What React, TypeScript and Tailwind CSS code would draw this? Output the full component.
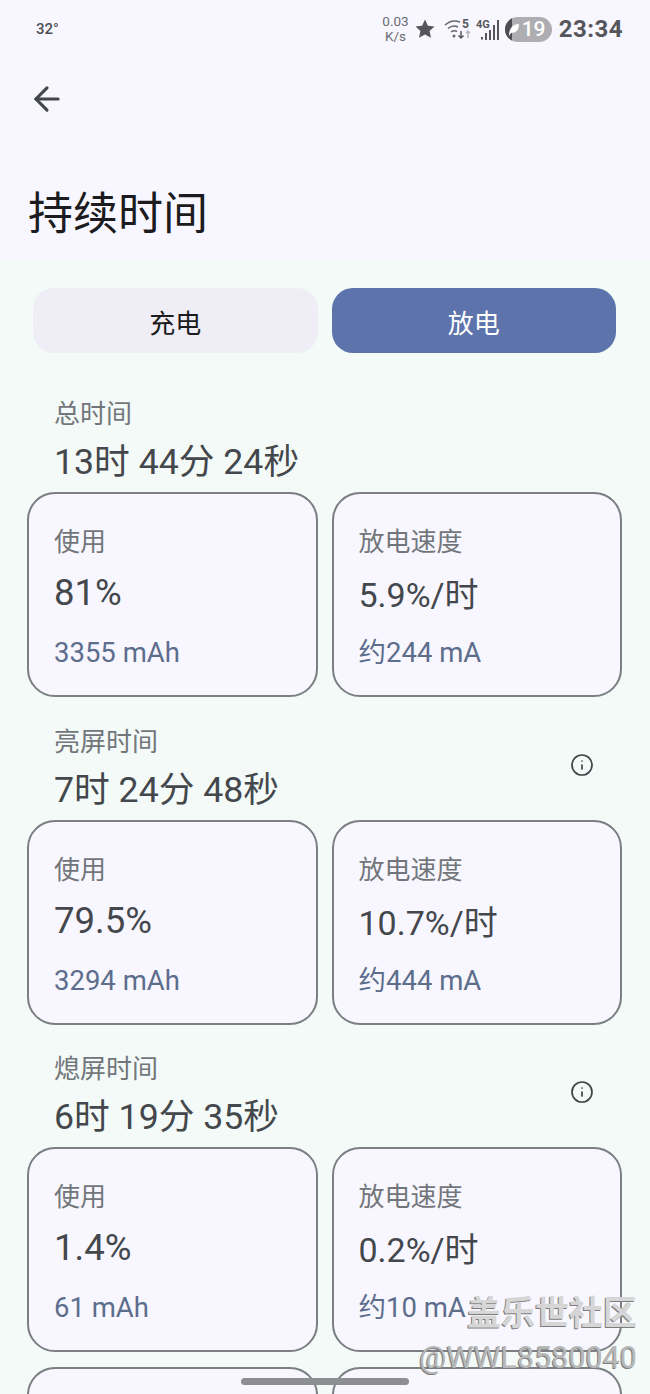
import { ArrowLeft, Info } from "lucide-react";

interface StatCardProps {
  label: string;
  value: string;
  sub: string;
  big?: boolean;
}

interface SectionProps {
  title: string;
  total: string;
  info?: boolean;
  usage: string;
  mah: string;
  rate: string;
  ma: string;
}

const fontStack = { fontFamily: 'Roboto, "Noto Sans CJK SC", sans-serif' };

const sections: SectionProps[] = [
  { title: "总时间", total: "13时 44分 24秒", usage: "81%", mah: "3355 mAh", rate: "5.9%/时", ma: "约244 mA" },
  { title: "亮屏时间", total: "7时 24分 48秒", info: true, usage: "79.5%", mah: "3294 mAh", rate: "10.7%/时", ma: "约444 mA" },
  { title: "熄屏时间", total: "6时 19分 35秒", info: true, usage: "1.4%", mah: "61 mAh", rate: "0.2%/时", ma: "约10 mA" },
];

function StatCard({ label, value, sub, big }: StatCardProps) {
  return (
    <div className="h-[205px] rounded-[28px] border-2 border-[#7b7e83] bg-[#f8f7ff] pl-[25px] pt-[31px]">
      <div className="h-[34px] text-[26px] leading-[34px] text-[#72767b]">{label}</div>
      {big ? (
        <div className="mt-[12px] h-[44px] text-[36.5px] leading-[44px] text-[#44474c]">{value}</div>
      ) : (
        <div className="mt-[14px] h-[44px] text-[34px] leading-[44px] text-[#44474c]">{value}</div>
      )}
      <div className={big ? "mt-[20px] h-[36px] text-[27.5px] leading-[36px] text-[#5d6d8c]" : "mt-[18px] h-[36px] text-[27.5px] leading-[36px] text-[#5d6d8c]"}>
        {sub}
      </div>
    </div>
  );
}

function StatusIcons() {
  return (
    <div className="flex items-center">
      <div className="mr-[6px] flex flex-col items-center text-[13.5px] leading-[15px] text-[#6b6c72]">
        <span>0.03</span>
        <span>K/s</span>
      </div>
      <svg width="20" height="20" viewBox="0 0 20 20" className="mr-[9px]">
        <path d="M10 0.5l2.9 6.3 6.6.7-4.900 4.500 1.400 6.800L10 15.400l-6 3.400 1.400-6.800L.5 7.500l6.600-.7z" fill="#55565c" />
      </svg>
      <svg width="30" height="22" viewBox="0 0 30 22" className="mr-[2px]">
        <path d="M1 7C6 2.500 11 2 16 4" fill="none" stroke="#66676d" strokeWidth="1.500" />
        <path d="M4 10.500c3.500-3 7-3 10-1.500" fill="none" stroke="#66676d" strokeWidth="1.500" />
        <path d="M7 14c2-1.500 4-1.500 6-.5" fill="none" stroke="#66676d" strokeWidth="1.500" />
        <circle cx="10" cy="18" r="1.500" fill="#66676d" />
        <path d="M17 13v7m-2.500-2.500L17 20l2.500-2.500" fill="none" stroke="#55565c" strokeWidth="1.500" />
        <path d="M24 20v-7m-2 2l2-2 2 2" fill="none" stroke="#b5b6ba" strokeWidth="1.500" />
        <text x="18" y="10" fontSize="12" fontWeight="700" fill="#55565c">5</text>
      </svg>
      <svg width="25" height="24" viewBox="0 0 25 24" className="mr-[4px]">
        <text x="0" y="11" fontSize="11" fontWeight="700" fill="#55565c">4G</text>
        <rect x="5" y="20" width="2" height="2.500" fill="#55565c" />
        <rect x="9" y="16" width="2" height="7" fill="#55565c" />
        <rect x="13" y="13" width="2" height="10" fill="#55565c" />
        <rect x="17" y="8" width="2" height="15" fill="#55565c" />
        <rect x="21" y="3" width="2" height="20" fill="#55565c" />
      </svg>
      <div className="relative mr-[7px] flex h-[25px] w-[47px] items-center overflow-hidden rounded-full bg-[#aeaeb2]">
        <div className="h-full w-[7px] bg-[#4d4e54]" />
        <svg width="12" height="14" viewBox="0 0 12 14" className="absolute left-[3px] top-[6px]">
          <path d="M1 13C1 6 4 1 11 1c0 6-3 9-8 9z" fill="#fff" />
        </svg>
        <span className="ml-[10px] text-[21px] font-medium leading-[25px] text-white">19</span>
      </div>
      <span className="text-[24px] font-bold leading-[30px] tracking-[0.5px] text-[#55565c]">23:34</span>
    </div>
  );
}

export default function App() {
  return (
    <div className="relative h-[1394px] w-[650px] overflow-hidden bg-[#f3faf7]" style={fontStack}>
      <div className="h-[258px] bg-[#f8f7ff]">
        <div className="flex h-[58px] items-center justify-between pl-[36px] pr-[27px]">
          <span className="text-[15px] font-medium leading-[20px] text-[#4d4e54]">32°</span>
          <StatusIcons />
        </div>
        <div className="flex h-[82px] items-center pl-[28px]">
          <ArrowLeft className="h-[38px] w-[38px] text-[#43464b]" strokeWidth={2} />
        </div>
        <div className="pl-[28px] pt-[44px] text-[45px] leading-[62px] text-[#1c1c20]">持续时间</div>
      </div>

      <div className="pl-[27px] pr-[28px] pt-[30px]">
        <div className="grid grid-cols-2 gap-[14px] px-[6px]">
          <div className="flex h-[65px] items-center justify-center rounded-[21px] bg-[#efedf5] pt-[8px] text-[26px] text-[#1c1c20]">充电</div>
          <div className="flex h-[65px] items-center justify-center rounded-[21px] bg-[#5c74ab] pt-[8px] text-[26px] text-white">放电</div>
        </div>

        <div className="mt-[41px] flex flex-col gap-[24.5px]">
          {sections.map((s) => (
            <div key={s.title}>
              <div className="relative pl-[27px]">
                <div className="h-[40px] text-[26px] leading-[40px] text-[#72767b]">{s.title}</div>
                <div className="mt-[7px] h-[42px] text-[35.7px] leading-[42px] text-[#44474c]">{s.total}</div>
                {s.info && <Info className="absolute right-[28px] top-[31px] h-[24px] w-[24px] text-[#3f4247]" strokeWidth={1.7} />}
              </div>
              <div className="mt-[9px] grid grid-cols-2 gap-[14px]">
                <StatCard label="使用" value={s.usage} sub={s.mah} big />
                <StatCard label="放电速度" value={s.rate} sub={s.ma} />
              </div>
            </div>
          ))}
          <div className="mt-[-9.5px] grid grid-cols-2 gap-[14px]">
            <div className="h-[205px] rounded-[28px] border-2 border-[#7b7e83] bg-[#f8f7ff]" />
            <div className="h-[205px] rounded-[28px] border-2 border-[#7b7e83] bg-[#f8f7ff]" />
          </div>
        </div>
      </div>

      <div className="absolute left-[241px] top-[1378px] h-[7px] w-[168px] rounded-full bg-[#8d8e92]" />

      <div className="absolute right-[13px] top-[1292px] text-right [text-shadow:-1px_1px_0_#7c7c7c]">
        <div className="text-[34px] font-bold leading-[42px] text-[#d6d6d6]">盖乐世社区</div>
        <div className="text-[30.5px] leading-[48px] text-[#b8b8b8]">@WWL8580040</div>
      </div>
    </div>
  );
}
